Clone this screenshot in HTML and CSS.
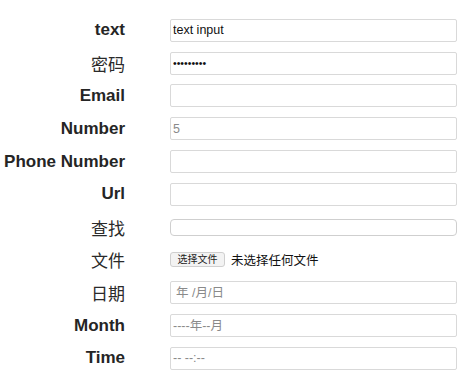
FILE: index.html
```html
<!DOCTYPE html>
<html lang="zh-CN">
<head>
<meta charset="utf-8">
<link rel="stylesheet" href="styles.css">
</head>
<body>
<form class="form">
  <label class="lbl">text</label>
  <input class="field" type="text" value="text input">
  <label class="lbl cjk">密码</label>
  <input class="field pw" type="text" value="•••••••••">
  <label class="lbl">Email</label>
  <input class="field" type="text">
  <label class="lbl">Number</label>
  <input class="field" type="text" placeholder="5">
  <label class="lbl">Phone Number</label>
  <input class="field" type="text">
  <label class="lbl">Url</label>
  <input class="field" type="text">
  <label class="lbl cjk">查找</label>
  <input class="field search" type="text">
  <label class="lbl cjk">文件</label>
  <div class="file"><span class="file-btn">选择文件</span><span class="file-name">未选择任何文件</span></div>
  <label class="lbl cjk">日期</label>
  <input class="field muted date" type="text" placeholder="年 /月/日">
  <label class="lbl">Month</label>
  <input class="field muted" type="text" placeholder="----年--月">
  <label class="lbl">Time</label>
  <input class="field muted" type="text" placeholder="-- --:--">
</form>
</body>
</html>
```

FILE: styles.css
```css
html, body {
  margin: 0;
  padding: 0;
  background: #ffffff;
}

body {
  font-family: "Liberation Sans", Arial, "Noto Sans CJK SC", sans-serif;
  color: #222;
}

.form {
  display: grid;
  grid-template-columns: 125px 287px;
  grid-auto-rows: 32.8px;
  column-gap: 45px;
  align-items: center;
  padding-top: 14px;
}

.lbl {
  text-align: right;
  font-size: 17px;
  font-weight: bold;
  color: #252525;
  white-space: nowrap;
}

.lbl.cjk {
  font-weight: normal;
  color: #2a2a2a;
}

.field {
  box-sizing: border-box;
  width: 287px;
  height: 23px;
  margin: 0;
  padding: 0 2px;
  border: 1px solid #d9d9d9;
  border-radius: 2px;
  background: #fff;
  font-family: "Liberation Sans", Arial, "Noto Sans CJK SC", sans-serif;
  font-size: 12.5px;
  color: #111;
  outline: none;
}

.field.pw {
  font-size: 10.5px;
  letter-spacing: 0;
}

.field::placeholder {
  color: #8a8a8a;
  opacity: 1;
}

.field.search {
  height: 17px;
  border-radius: 4px;
  border-color: #cfcfcf;
}

.field.date {
  padding-left: 5px;
}

.file {
  display: flex;
  align-items: center;
  gap: 6px;
}

.file-btn {
  box-sizing: border-box;
  width: 55px;
  height: 15px;
  border: 1px solid #cfcfcf;
  border-radius: 3px;
  background: #f3f3f3;
  font-size: 10px;
  line-height: 13px;
  text-align: center;
  color: #222;
}

.file-name {
  font-size: 12.5px;
  color: #111;
}
```
